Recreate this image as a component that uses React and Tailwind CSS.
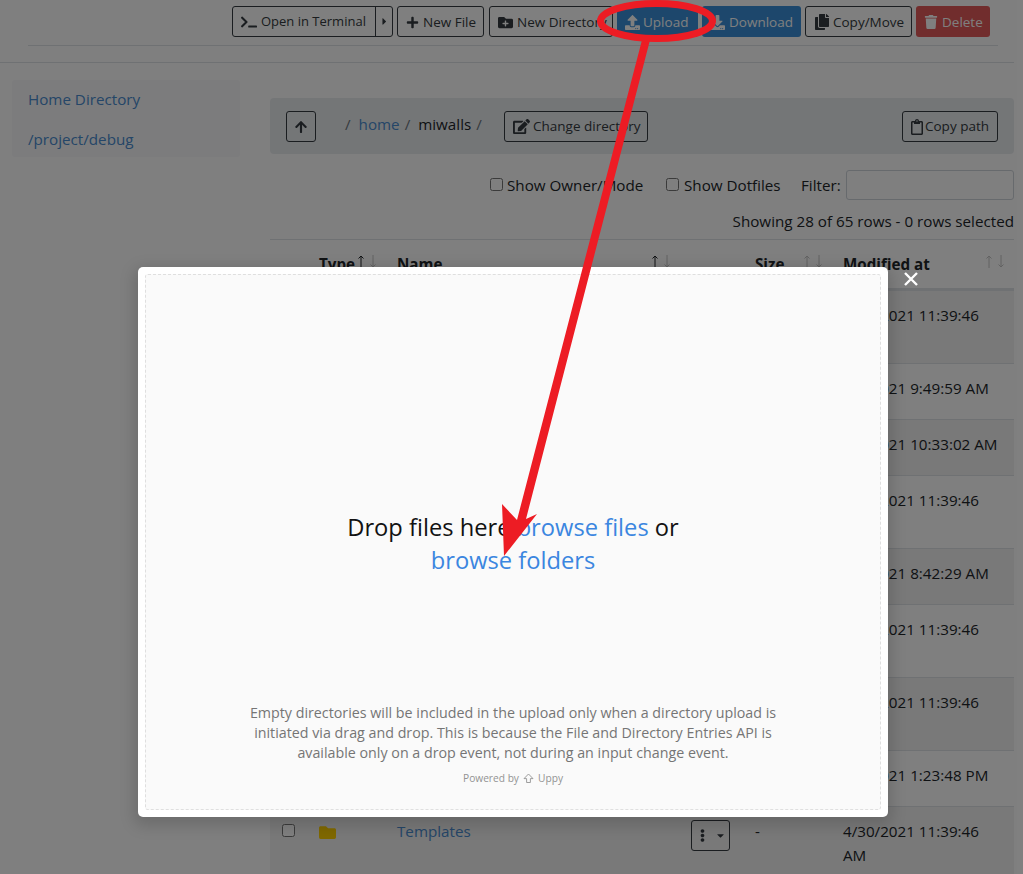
import {
  FaTerminal,
  FaCaretRight,
  FaCaretDown,
  FaPlus,
  FaFolderPlus,
  FaUpload,
  FaDownload,
  FaCopy,
  FaTrash,
  FaArrowUp,
  FaEdit,
  FaRegClipboard,
  FaFolder,
  FaEllipsisV,
} from "react-icons/fa";

const outlineBtn = "flex items-center h-[31px] px-2 pt-px border border-[#343a40] rounded-[3px] text-[#343a40] whitespace-nowrap";
const solidBtn = "flex items-center h-[31px] px-2 pt-px rounded-[3px] text-white whitespace-nowrap";

// hidden part of the table: only the end of the date column shows next to the modal
const rows = [
  { date: "4/30/2021 11:39:46 AM", h: "h-[73px]" },
  { date: "4/8/2021 9:49:59 AM", h: "h-[56px]" },
  { date: "4/6/2021 10:33:02 AM", h: "h-[56px]" },
  { date: "4/30/2021 11:39:46 AM", h: "h-[73px]" },
  { date: "4/2/2021 8:42:29 AM", h: "h-[56px]" },
  { date: "4/30/2021 11:39:46 AM", h: "h-[73px]" },
  { date: "4/30/2021 11:39:46 AM", h: "h-[73px]" },
  { date: "4/1/2021 1:23:48 PM", h: "h-[56px]" },
];

const SortArrows = ({ active }) => (
  <span className="flex gap-[6px] mt-[-5px]">
    <svg width="6" height="13" viewBox="0 0 6 13" fill="none" stroke={active ? "#212529" : "#c4c4c4"} strokeWidth="1">
      <path d="M3 13 V1 M0.5 3.5 L3 1 L5.5 3.5" />
    </svg>
    <svg width="6" height="13" viewBox="0 0 6 13" fill="none" stroke="#c4c4c4" strokeWidth="1">
      <path d="M3 0 V12 M0.5 9.5 L3 12 L5.5 9.5" />
    </svg>
  </span>
);

const Toolbar = () => (
  <div className="flex justify-end gap-1 pt-[6px] pr-[33px] text-[13.5px]">
    <div className="flex h-[31px] border border-[#343a40] rounded-[3px] text-[#343a40]">
      <span className="flex items-center gap-1 pl-2 pt-px w-[142px] text-[13px] whitespace-nowrap">
        <FaTerminal className="text-[16px] shrink-0" /> Open in Terminal
      </span>
      <span className="flex items-center justify-center w-[17px] border-l border-[#343a40]">
        <FaCaretRight className="text-[11px]" />
      </span>
    </div>
    <button className={`${outlineBtn} gap-1 w-[87px] mr-px`}><FaPlus className="text-[13px] shrink-0" /> New File</button>
    <button className={`${outlineBtn} gap-[4px] w-[124px]`}><FaFolderPlus className="text-[15px] shrink-0" /> New Directory</button>
    <button className={`${solidBtn} gap-[3px] bg-[#3a8fd8] w-[81px]`}><FaUpload className="text-[15px] shrink-0" /> Upload</button>
    <button className={`${solidBtn} gap-1 bg-[#3a8fd8] w-[99px]`}><FaDownload className="text-[15px] shrink-0" /> Download</button>
    <button className={`${outlineBtn} gap-[3px] w-[107px]`}><FaCopy className="text-[16px] shrink-0" /> Copy/Move</button>
    <button className={`${solidBtn} gap-1 bg-[#e25a5a] w-[74px]`}><FaTrash className="text-[14px] shrink-0" /> Delete</button>
  </div>
);

const Sidebar = () => (
  <div className="w-[228px] h-[77px] mt-[17px] bg-[#f8f9fa] rounded-[3px] px-4 pt-[7px] text-[#4a8cd0]">
    <div className="h-10 leading-6">Home Directory</div>
    <div className="leading-6">/project/debug</div>
  </div>
);

const FileBrowser = () => (
  <div className="w-[744px] mt-[35px]">
    <div className="flex items-center h-[56px] bg-[#e9ecef] rounded-[4px] pl-4 pr-4">
      <button className={`${outlineBtn} w-[30px] justify-center`}><FaArrowUp className="text-[14px]" /></button>
      <div className="flex ml-[29px] w-[159px] mt-[-4px] text-[#6c757d]">
        <span>/</span>
        <span className="ml-[8px] text-[#4a8cd0]">home</span>
        <span className="ml-[5px]">/</span>
        <span className="ml-[8px] text-[#212529]">miwalls</span>
        <span className="ml-[5px]">/</span>
      </div>
      <button className={`${outlineBtn} gap-[3px] w-[144px] text-[13.5px]`}><FaEdit className="text-[17px] shrink-0" /> Change directory</button>
      <button className={`${outlineBtn} w-[96px] ml-auto pl-[6px] text-[13.5px]`}><FaRegClipboard className="text-[16px] shrink-0" /> Copy path</button>
    </div>
    <div className="flex items-center justify-end h-[30px] mt-[16px] text-[#212529]">
      <input type="checkbox" className="w-[13px] h-[13px] mr-1 mt-[-1px]" />
      <span className="w-[159px]">Show Owner/Mode</span>
      <input type="checkbox" className="w-[13px] h-[13px] mr-[5px] mt-[-1px]" />
      <span className="w-[117px]">Show Dotfiles</span>
      <span className="w-[45px]">Filter:</span>
      <input className="w-[168px] h-[30px] border border-[#ced4da] rounded-[3px] bg-white" />
    </div>
    <div className="text-right h-6 mt-[9px] leading-6 text-[#212529]">Showing 28 of 65 rows - 0 rows selected</div>
    <div className="border-t border-[#dee2e6] mt-[6px]">
      <div className="grid grid-cols-[49px_78px_294px_64px_88px_171px] h-[51px] items-center font-bold text-[#212529] border-b-[3px] border-[#dee2e6]">
        <span />
        <span className="flex gap-[3px] items-center">Type <SortArrows active /></span>
        <span className="flex items-center justify-between w-[273px]">Name <SortArrows active /></span>
        <span />
        <span className="flex items-center gap-[20px]">Size <SortArrows /></span>
        <span className="flex items-center justify-between pr-[10px]">Modified at <SortArrows /></span>
      </div>
      {rows.map((row, i) => (
        <div key={i} className={`grid grid-cols-[573px_171px] pt-3 border-b border-[#dee2e6] leading-6 text-[#212529] ${row.h} ${i % 2 === 0 ? "bg-black/5" : ""}`}>
          <span />
          <span className="w-[160px]">{row.date}</span>
        </div>
      ))}
      <div className="grid grid-cols-[49px_78px_294px_64px_88px_171px] pt-3 h-[80px] leading-6 bg-black/5 text-[#212529]">
        <span className="pl-3"><input type="checkbox" className="w-[13px] h-[13px]" /></span>
        <span><FaFolder className="text-[17px] text-[#ffd000] mt-[5px]" /></span>
        <span className="text-[#4a8cd0]">Templates</span>
        <span>
          <button className="flex items-center justify-center gap-[6px] w-[39px] h-[31px] mt-px border border-[#343a40] rounded-[3px] text-[#343a40]">
            <FaEllipsisV className="text-[13px]" />
            <FaCaretDown className="text-[11px]" />
          </button>
        </span>
        <span>-</span>
        <span className="w-[160px]">4/30/2021 11:39:46 AM</span>
      </div>
    </div>
  </div>
);

const UploadModal = () => (
  <div className="absolute inset-0 bg-black/50">
    <div className="absolute left-[138px] top-[267px] w-[750px] h-[550px] bg-white rounded-[5px] p-[7px] shadow-[0_5px_15px_4px_rgba(0,0,0,0.15)]">
      <div className="flex flex-col items-center h-full bg-[#fafafa] border border-dashed border-[#dfdfdf] rounded-[3px]">
        <div className="w-[345px] mt-[236px] text-center text-[23.7px] leading-[33px] text-[#121212]">
          Drop files here <span className="text-[#3b86e0]">browse files</span> or <span className="text-[#3b86e0]">browse folders</span>
        </div>
        <div className="w-[540px] mt-auto text-center text-[14.27px] leading-5 text-[#757575]">
          Empty directories will be included in the upload only when a directory upload is initiated via drag and drop. This is because the File and Directory Entries API is available only on a drop event, not during an input change event.
        </div>
        <div className="flex items-center gap-1 mt-[7px] mb-[23px] text-[10.2px] leading-4 text-[#939393]">
          Powered by
          <svg width="11" height="11" viewBox="0 0 11 11" fill="none" stroke="#939393" strokeWidth="0.9">
            <path d="M5.5 1 L10 5.6 H7.4 V9.5 H3.6 V5.6 H1 Z" />
          </svg>
          Uppy
        </div>
      </div>
    </div>
    <svg className="absolute left-[904px] top-[272px]" width="14" height="14" viewBox="0 0 14 14" stroke="white" strokeWidth="2.4">
      <path d="M1 1 L13 13 M13 1 L1 13" />
    </svg>
  </div>
);

// red hand-drawn markup on top of the screenshot
const Annotation = () => (
  <svg className="absolute inset-0" width="1023" height="874" viewBox="0 0 1023 874" fill="none">
    <ellipse cx="656.5" cy="21" rx="56" ry="17.5" stroke="#ed1c24" strokeWidth="7" />
    <polygon points="642,40 650,40 526,519 537,514 504,556 502,504 517,520" fill="#ed1c24" />
  </svg>
);

export default function App() {
  return (
    <div className="relative h-[874px] overflow-hidden bg-white text-[15.2px] font-['Open_Sans',sans-serif]">
      <Toolbar />
      <div className="h-px bg-[#dee2e6] mt-2 ml-[28px] mr-[25px]" />
      <div className="h-px bg-[#dee2e6] mt-4 mr-[9px]" />
      <div className="flex gap-[30px] pl-3">
        <Sidebar />
        <FileBrowser />
      </div>
      <UploadModal />
      <Annotation />
    </div>
  );
}
